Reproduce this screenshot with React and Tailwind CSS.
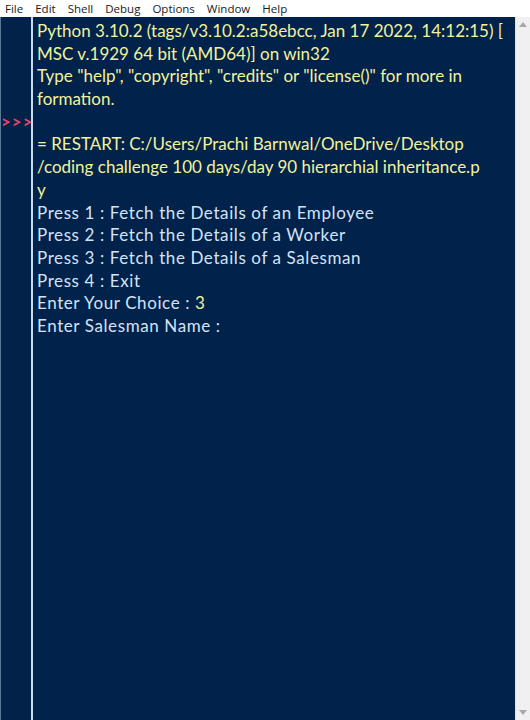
import React from "react";

const menu = ["File", "Edit", "Shell", "Debug", "Options", "Window", "Help"];

// shell output, already broken where IDLE wraps it
const lines = [
  { text: "Python 3.10.2 (tags/v3.10.2:a58ebcc, Jan 17 2022, 14:12:15) [", tone: "out" },
  { text: "MSC v.1929 64 bit (AMD64)] on win32", tone: "out" },
  { text: "Type \"help\", \"copyright\", \"credits\" or \"license()\" for more in", tone: "out" },
  { text: "formation.", tone: "out" },
  { text: "", tone: "out", prompt: true },
  { text: "= RESTART: C:/Users/Prachi Barnwal/OneDrive/Desktop", tone: "out" },
  { text: "/coding challenge 100 days/day 90 hierarchial inheritance.p", tone: "out" },
  { text: "y", tone: "out" },
  { text: "Press 1 : Fetch the Details of an Employee", tone: "user" },
  { text: "Press 2 : Fetch the Details of a Worker", tone: "user" },
  { text: "Press 3 : Fetch the Details of a Salesman", tone: "user" },
  { text: "Press 4 : Exit", tone: "user" },
  { text: "Enter Your Choice : ", tone: "user", input: "3" },
  { text: "Enter Salesman Name : ", tone: "user" },
];

export default function App() {
  return (
    <div className="w-[530px] h-[720px] flex flex-col bg-white overflow-hidden">
      {/* Menu bar */}
      <div
        className="h-[17px] flex items-center gap-[12px] pl-[5px] text-[11.5px] text-[#1a1a1a] bg-white"
        style={{ fontFamily: '"Open Sans", "Noto Sans", sans-serif' }}
      >
        {menu.map((m) => (
          <span key={m} className="leading-none">{m}</span>
        ))}
      </div>

      <div className="flex-1 flex">
        {/* Gutter */}
        <div className="w-[31px] bg-[#03224a] border-l border-[#5a7896] pt-[3px]">
          {lines.map((l, i) => (
            <div
              key={i}
              className="h-[22.7px] leading-[22.7px] text-[17px] font-bold tracking-[1px] text-[#e0466c]"
              style={{ fontFamily: '"Lato", sans-serif' }}
            >
              {l.prompt ? ">>>" : ""}
            </div>
          ))}
        </div>
        <div className="w-[2px] bg-[#c8dcf0]" />

        {/* Shell text */}
        <div
          className="flex-1 bg-[#01224a] pl-[4px] pt-[3px] text-[17px]"
          style={{ fontFamily: '"Lato", sans-serif' }}
        >
          {lines.map((l, i) => (
            <div
              key={i}
              className={`h-[22.7px] leading-[22.7px] whitespace-pre ${
                l.tone === "out"
                  ? "text-[#f2f29c]"
                  : "text-[#d6e3f5] tracking-[0.6px]"
              }`}
            >
              {l.text}
              {l.input && <span className="text-[#f2f29c]">{l.input}</span>}
            </div>
          ))}
        </div>

        {/* Scrollbar */}
        <div className="w-[15px] bg-[#f0f0f0] border-l border-[#e2e2e2] flex flex-col justify-between items-center py-[5px]">
          <svg width="8" height="5" viewBox="0 0 8 5">
            <path d="M0 5 L4 0 L8 5 Z" fill="#a8a8a8" />
          </svg>
          <svg width="8" height="5" viewBox="0 0 8 5">
            <path d="M0 0 L4 5 L8 0 Z" fill="#a8a8a8" />
          </svg>
        </div>
      </div>
    </div>
  );
}
